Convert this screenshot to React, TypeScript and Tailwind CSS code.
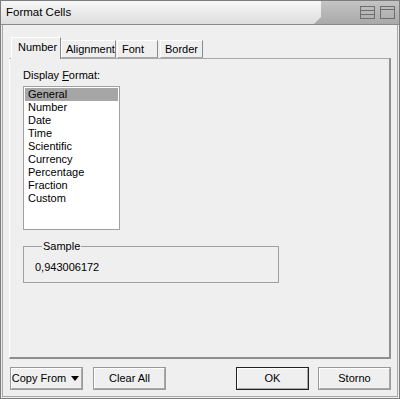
import React, { useState } from 'react';

const formats = ['General', 'Number', 'Date', 'Time', 'Scientific', 'Currency', 'Percentage', 'Fraction', 'Custom'];
const tabs = ['Number', 'Alignment', 'Font', 'Border'];

function Btn({ label, def, children }: { label?: string; def?: boolean; children?: React.ReactNode }) {
  return (
    <button
      className={
        'h-[23px] w-[73px] flex items-center justify-center bg-[#efefef] text-[11px] text-black ' +
        (def ? 'border border-[#222]' : 'border border-[#9a9a9a]')
      }
    >
      <span className="w-full h-full flex items-center justify-center border-t border-l border-t-white border-l-white border-b border-r border-b-[#a8a8a8] border-r-[#a8a8a8]">
        {children ?? label}
      </span>
    </button>
  );
}

export default function App() {
  const [tab, setTab] = useState('Number');
  const [sel, setSel] = useState('General');

  return (
    <div
      className="w-[400px] h-[399px] flex flex-col bg-[#efefef] border border-[#7d7d7d] overflow-hidden select-none"
      style={{ fontFamily: '"Liberation Sans", Arial, sans-serif' }}
    >
      {/* title bar */}
      <div className="h-[24px] flex bg-gradient-to-b from-[#c4c4c4] to-[#a9a9a9] border-b border-[#8a8a8a] shrink-0">
        <div className="flex-1 flex items-center pl-[5px] bg-gradient-to-b from-[#f7f7f7] to-[#dedede] text-[11.5px] text-black [clip-path:polygon(0_0,100%_0,100%_70%,calc(100%-7px)_100%,0_100%)]">
          Format Cells
        </div>
        <div className="w-[78px] flex items-center justify-end gap-[5px] pr-[4px]">
          <svg width="15" height="13" viewBox="0 0 15 13">
            <rect x="0.5" y="0.5" width="14" height="12" fill="none" stroke="#6e6e6e" />
            <line x1="1" y1="4.5" x2="14" y2="4.5" stroke="#6e6e6e" />
            <line x1="1" y1="8.5" x2="14" y2="8.5" stroke="#6e6e6e" />
          </svg>
          <svg width="15" height="13" viewBox="0 0 15 13">
            <rect x="0.5" y="0.5" width="14" height="12" fill="none" stroke="#6e6e6e" />
            <line x1="1" y1="3.5" x2="14" y2="3.5" stroke="#6e6e6e" />
          </svg>
        </div>
      </div>

      {/* body */}
      <div className="flex-1 flex flex-col border-l border-r border-b border-[#a8a8a8] mx-[1px] mb-[1px] px-[6px] pt-[12px]">
        {/* tabs */}
        <div className="flex items-end h-[21px] pl-[2px] relative z-10">
          {tabs.map((t) => {
            const active = t === tab;
            return (
              <div
                key={t}
                onClick={() => setTab(t)}
                className={
                  'flex items-center text-[11px] text-black bg-[#efefef] border-t border-l border-white border-r border-r-[#8a8a8a] ' +
                  (active
                    ? 'h-[22px] px-[6px] -mb-[1px] pb-[2px] w-[50px]'
                    : 'h-[18px] px-[4px] mt-[3px] border-b border-b-[#a8a8a8] ' +
                      (t === 'Alignment' ? 'w-[55px]' : t === 'Font' ? 'w-[41px] ml-[1px]' : 'w-[43px] ml-[2px]'))
                }
              >
                {t}
              </div>
            );
          })}
        </div>

        {/* panel */}
        <div className="h-[301px] border-t border-t-[#a8a8a8] border-l border-l-white border-r-2 border-r-[#8f8f8f] border-b-2 border-b-[#8f8f8f] pl-[13px] pt-[10px]">
          <div className="text-[11px] text-black leading-[13px] mb-[4px]">
            Display <span className="underline">F</span>ormat:
          </div>
          <div className="w-[97px] h-[144px] bg-white border border-[#a0a0a0] p-[1px]">
            {formats.map((f) => (
              <div
                key={f}
                onClick={() => setSel(f)}
                className={
                  'h-[13px] leading-[13px] pl-[3px] text-[11px] text-black ' + (f === sel ? 'bg-[#a6a6a6]' : '')
                }
              >
                {f}
              </div>
            ))}
          </div>

          <fieldset className="mt-[10px] w-[256px] h-[43px] border border-[#a0a0a0] pl-[11px]">
            <legend className="ml-[7px] px-[1px] text-[11px] leading-[12px] text-black">Sample</legend>
            <div className="text-[11px] text-black mt-[9px] leading-[13px]">0,943006172</div>
          </fieldset>
        </div>

        {/* buttons */}
        <div className="flex items-center mt-[8px] pl-[1px]">
          <Btn>
            <span className="flex items-center gap-[5px] -ml-[2px]">
              Copy From
              <svg width="8" height="5" viewBox="0 0 8 5">
                <polygon points="0,0 8,0 4,5" fill="#000" />
              </svg>
            </span>
          </Btn>
          <div className="ml-[10px]">
            <Btn label="Clear All" />
          </div>
          <div className="flex-1" />
          <Btn label="OK" def />
          <div className="ml-[9px]">
            <Btn label="Storno" />
          </div>
        </div>
      </div>
    </div>
  );
}
